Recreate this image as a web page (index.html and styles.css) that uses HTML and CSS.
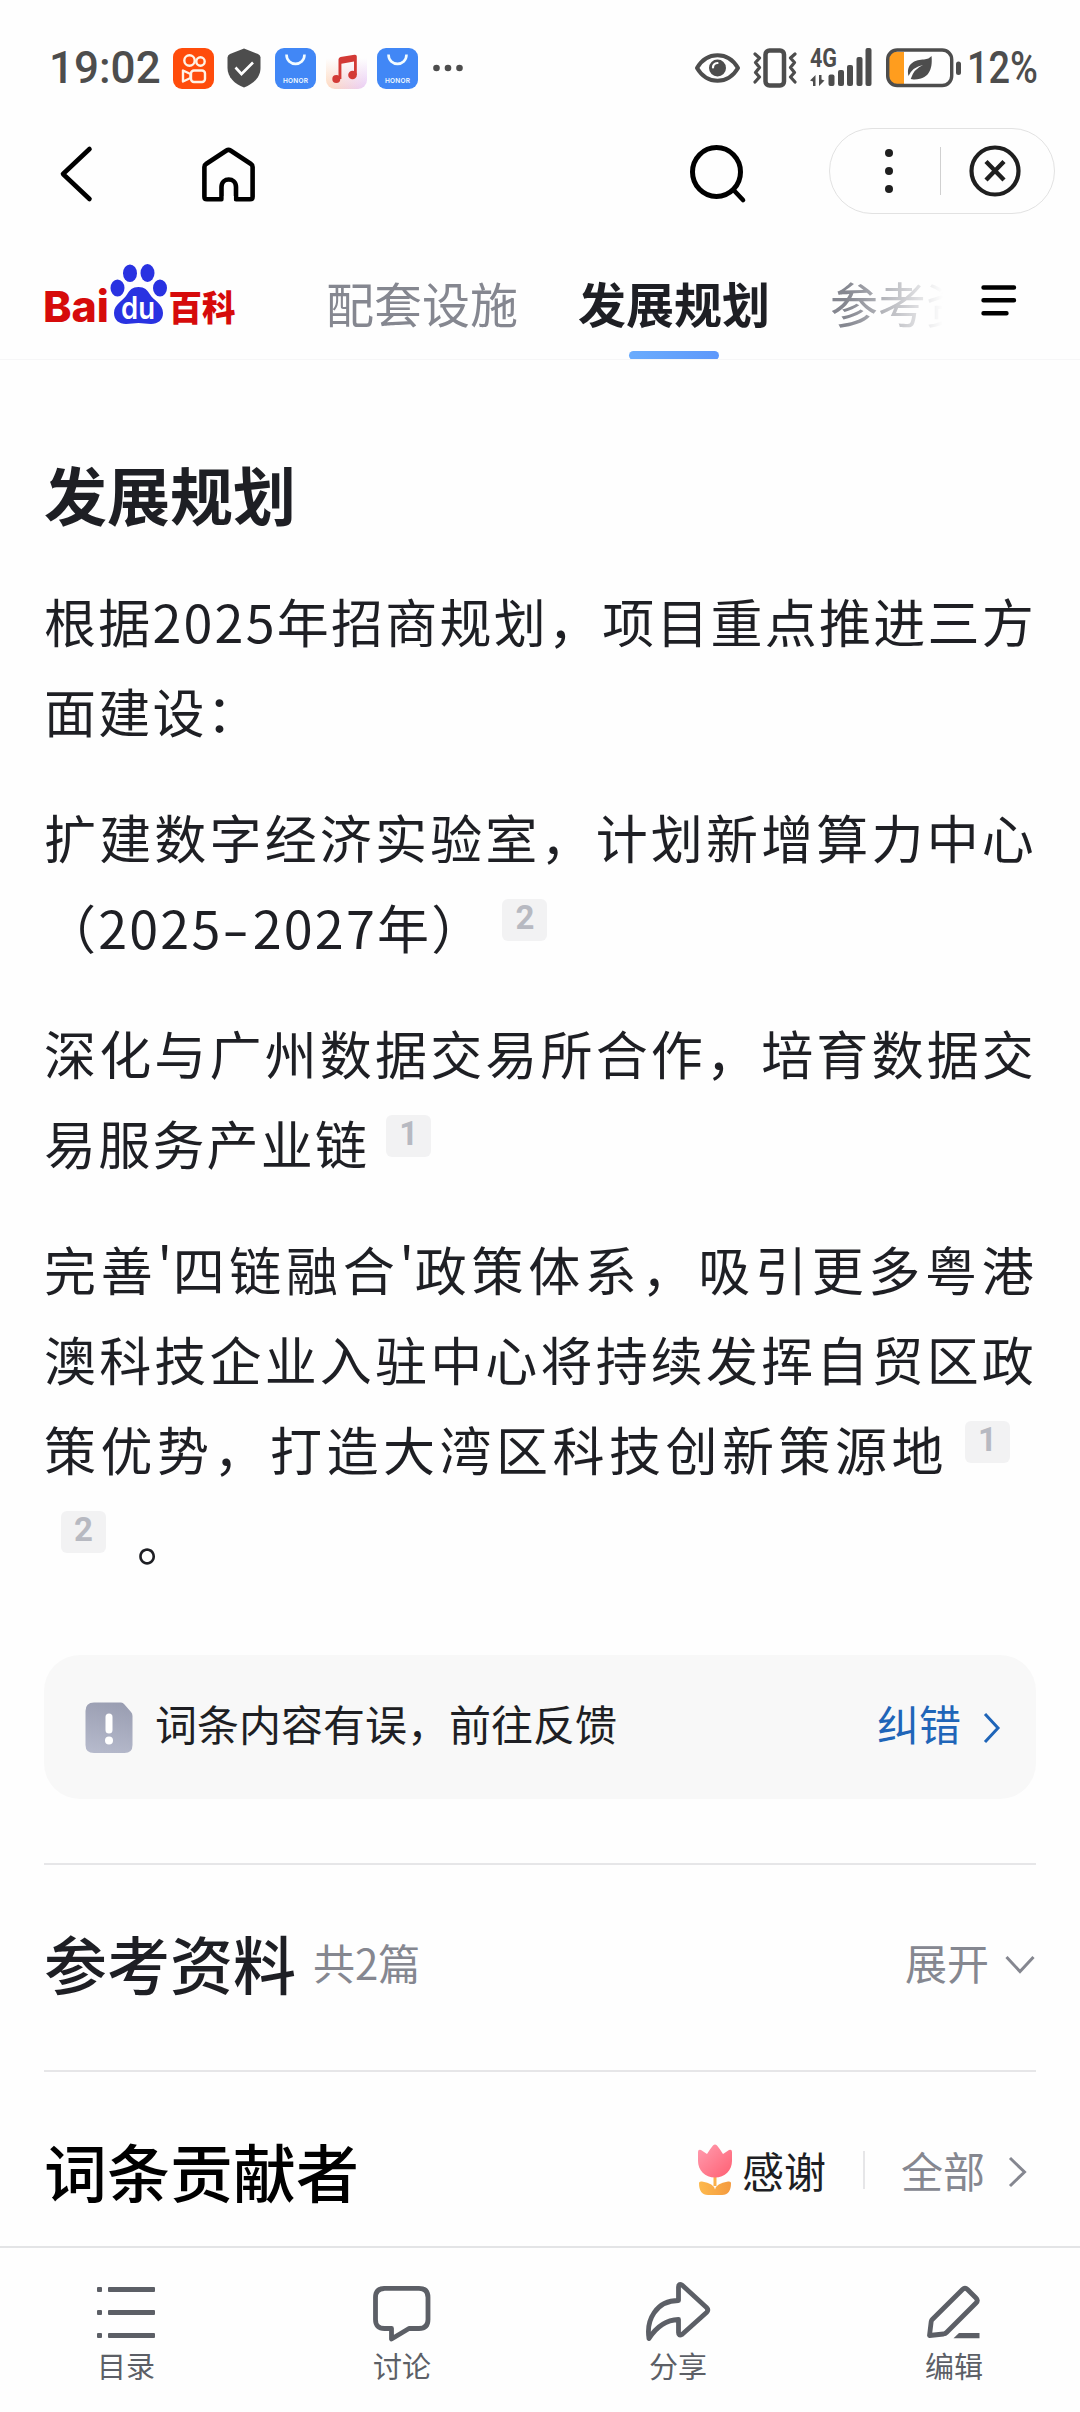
FILE: index.html
```html
<!DOCTYPE html>
<html lang="zh-CN">
<head>
    <meta charset="UTF-8">
    <meta name="viewport" content="width=device-width, initial-scale=1.0">
    <title>发展规划 - 百度百科</title>
    <link rel="stylesheet" href="styles.css">
</head>
<body>
    <div class="status-bar">
        <span class="time">19:02</span>
        <div class="apps">
            <svg width="41" height="41" viewBox="0 0 41 41">
                <rect width="41" height="41" rx="9" fill="#ff4c0b"/>
                <g fill="none" stroke="#fff3e6" stroke-width="2.4">
                    <circle cx="16.5" cy="12.5" r="5.2"/>
                    <circle cx="27.5" cy="13.5" r="4.2"/>
                    <rect x="18" y="22.5" width="14" height="11.5" rx="3"/>
                    <path d="M17.500 26l-7.500-3.500v11l7.500-3.500z" stroke-linejoin="round"/>
                </g>
            </svg>
            <svg class="shield" width="34" height="40" viewBox="0 0 34 40">
                <path d="M17 0.500L31 6q2.500 1 2.500 3.500V20c0 9-7 16-16.500 19.500C7.500 36 .5 29 .5 20V9.500Q.5 7 3 6z" fill="#4d4d4d"/>
                <path d="M8.500 19.500l6 6.500 11.500-11.500" fill="none" stroke="#fff" stroke-width="2.600"/>
            </svg>
            <svg width="41" height="41" viewBox="0 0 41 41">
                <rect width="41" height="41" rx="9" fill="#4187f6"/>
                <path d="M11.500 6.500c0 12.500 18 12.500 18 0" fill="none" stroke="#f2fbff" stroke-width="2.600"/>
                <text class="honor" x="20.500" y="35" text-anchor="middle" textLength="25">HONOR</text>
            </svg>
            <svg width="41" height="41" viewBox="0 0 41 41">
                <defs>
                    <linearGradient id="music" x1="0" y1="0" x2="1" y2="0">
                        <stop offset="0" stop-color="#ffd9bd"/>
                        <stop offset="1" stop-color="#e9cdf7"/>
                    </linearGradient>
                    <linearGradient id="musicTop" x1="0" y1="0" x2="0" y2="1">
                        <stop offset="0.250" stop-color="#fefefe"/>
                        <stop offset="1" stop-color="#fefefe" stop-opacity="0"/>
                    </linearGradient>
                </defs>
                <rect width="41" height="41" rx="9" fill="url(#music)"/>
                <rect width="41" height="41" fill="url(#musicTop)"/>
                <g fill="#d33a36">
                    <circle cx="10.300" cy="31" r="4"/>
                    <circle cx="26.500" cy="27" r="4.300"/>
                    <path d="M12.500 11.500q0-2 2-2.500L28.500 6.800q2.300-.3 2.300 1.700V27h-2.800V13.500l-12.600 2.200V31h-2.900z"/>
                </g>
            </svg>
            <svg width="41" height="41" viewBox="0 0 41 41">
                <rect width="41" height="41" rx="9" fill="#4187f6"/>
                <path d="M11.500 6.500c0 12.500 18 12.500 18 0" fill="none" stroke="#f2fbff" stroke-width="2.600"/>
                <text class="honor" x="20.500" y="35" text-anchor="middle" textLength="25">HONOR</text>
            </svg>
        </div>
        <svg class="more" width="30" height="8" viewBox="0 0 30 8" fill="#4d4d4d">
            <circle cx="3.500" cy="4" r="3.300"/>
            <circle cx="15" cy="4" r="3.300"/>
            <circle cx="26.500" cy="4" r="3.300"/>
        </svg>
        <div class="system">
            <svg class="eye" width="45" height="30" viewBox="0 0 45 30">
                <path d="M2 15C12-2 33-2 43 15C33 32 12 32 2 15z" fill="none" stroke="#4d4d4d" stroke-width="4" stroke-linejoin="round"/>
                <circle cx="22.500" cy="15" r="8.500" fill="#4d4d4d"/>
                <path d="M18 14.500q0-4 4.500-4.500" fill="none" stroke="#fff" stroke-width="2.200" stroke-linecap="round"/>
            </svg>
            <svg class="vibrate" width="46" height="40" viewBox="0 0 46 40" fill="none" stroke="#4d4d4d">
                <rect x="13.500" y="2.500" width="18.500" height="35" rx="4" stroke-width="4.500"/>
                <path d="M3 6l4.500 4-4 4.500 4 5-4 5 4 4.500-4.500 5M43 6l-4.500 4 4 4.500-4 5 4 5-4 4.500 4.500 5" stroke-width="3.200" stroke-linecap="round" stroke-linejoin="round"/>
            </svg>
            <svg class="signal" width="62" height="40" viewBox="0 0 62 40" fill="#4d4d4d">
                <text class="net" x="0" y="18.500" textLength="27" lengthAdjust="spacingAndGlyphs">4G</text>
                <path d="M0 32.500l5.500-5.500V38h-2.500V33.500zM14.500 32.500l-5.500 5.500V27h2.500V31.500z"/>
                <rect x="18.500" y="26.500" width="6" height="11.500" rx="2"/>
                <rect x="28" y="22" width="6" height="16" rx="2"/>
                <rect x="37" y="17" width="6" height="21" rx="2"/>
                <rect x="46.500" y="9" width="6" height="29" rx="2"/>
                <rect x="55.500" y="0" width="6" height="38" rx="2"/>
            </svg>
            <svg class="battery" width="76" height="40" viewBox="0 0 76 40">
                <path d="M3 4h15v32H9q-6 0-6-7z" fill="#ff9d1e"/>
                <rect x="1.700" y="2" width="64" height="35.500" rx="9.500" fill="none" stroke="#4d4d4d" stroke-width="3.400"/>
                <rect x="70" y="13.500" width="5" height="13.500" rx="2.500" fill="#4d4d4d"/>
                <path d="M45.500 8c1 9 0 24-18 23.500l-2.800-.5q3-10 12.300-14-10.500 2-14.500 11C19.500 15 30 11.500 38 11.500q5-.5 7.500-3.500z" fill="#4d4d4d"/>
            </svg>
            <svg class="percent" width="70" height="40" viewBox="0 0 70 40" fill="#4d4d4d">
                <text x="0" y="35" textLength="71" lengthAdjust="spacingAndGlyphs">12%</text>
            </svg>
        </div>
    </div>

    <div class="nav-bar">
        <svg class="back" width="32" height="56" viewBox="0 0 32 56">
            <path d="M29.500 3L3 28l26.500 25" fill="none" stroke="#000" stroke-width="4.600" stroke-linecap="round" stroke-linejoin="round"/>
        </svg>
        <svg class="home" width="54" height="55" viewBox="0 0 54 55">
            <path d="M19.500 52.300H5q-2.600 0-2.600-2.600V20q0-2 1.600-3L24.500 3.500q2-1.300 4 0L49 17q1.600 1 1.600 3v29.700q0 2.600-2.600 2.600H34V40c0-10-14.500-10-14.500 0z" fill="none" stroke="#000" stroke-width="4.600" stroke-linejoin="round"/>
            <path d="M21.800 49h10v6h-10z" fill="#fff"/>
        </svg>
        <svg class="search" width="56" height="58" viewBox="0 0 56 58" fill="none" stroke="#000">
            <ellipse cx="26.500" cy="27" rx="24" ry="24.500" stroke-width="5"/>
            <path d="M44.500 46l8.500 9" stroke-width="4.600" stroke-linecap="round"/>
        </svg>
        <div class="capsule">
            <svg width="8" height="44" viewBox="0 0 8 44" fill="#1f1f1f">
                <circle cx="4" cy="4" r="4"/>
                <circle cx="4" cy="22" r="4"/>
                <circle cx="4" cy="40" r="4"/>
            </svg>
            <span class="capsule-line"></span>
            <svg width="52" height="52" viewBox="0 0 52 52" fill="none" stroke="#1f1f1f">
                <circle cx="26" cy="26" r="23.500" stroke-width="4.200"/>
                <path d="M17 16.500l18 18.500M35 16.500L17 35" stroke-width="4.400"/>
            </svg>
        </div>
    </div>

    <div class="tab-bar">
        <svg class="logo" width="192" height="62" viewBox="0 0 192 62">
            <text class="logo-latin" x="-1" y="58.500" textLength="66" lengthAdjust="spacingAndGlyphs">Bai</text>
            <g fill="#2932e1">
                <ellipse cx="73.500" cy="25" rx="7" ry="8.600"/>
                <ellipse cx="86" cy="10.300" rx="7" ry="8.800"/>
                <ellipse cx="103.500" cy="10" rx="7" ry="9"/>
                <ellipse cx="116" cy="25" rx="7" ry="8.600"/>
                <path d="M94.500 24c6 0 9 3 11.500 7.500 3 5.500 13 9 13 18.500 0 7-5 11-12 11-5 0-8-1-12.500-1s-8 1-12.500 1c-7 0-12-4-12-11 0-9 10-13 13-18.500C85.500 27 88.500 24 94.500 24z"/>
            </g>
            <text class="logo-du" x="77" y="55.500" textLength="34" lengthAdjust="spacingAndGlyphs">du</text>
            <text class="logo-cjk" x="124.500" y="57.500" textLength="67" lengthAdjust="spacingAndGlyphs">百科</text>
        </svg>
        <div class="tabs">
            <span class="tab">配套设施</span>
            <span class="tab active">发展规划</span>
            <span class="tab">参考资料</span>
        </div>
        <svg class="menu" width="36" height="32" viewBox="0 0 36 32" fill="none" stroke="#000" stroke-width="4.400" stroke-linecap="round">
            <path d="M2.500 2.500h30.500M2.500 15.300h30.500M2.500 28.300h23"/>
        </svg>
    </div>

    <div class="content">
        <h2>发展规划</h2>
        <p>根据2025年招商规划，项目重点推进三方面建设：</p>
        <p>扩建数字经济实验室，计划新增算力中心（2025<span class="dash">-</span>2027年）<sup class="wide">2</sup></p>
        <p>深化与广州数据交易所合作，培育数据交易服务产业链<sup>1</sup></p>
        <p>完善<span class="quote">'</span>四链融合<span class="quote">'</span>政策体系，吸引更多粤港澳科技企业入驻中心将持续发挥自贸区政策优势，打造大湾区科技创新策源地<sup>1</sup> <sup>2</sup>。</p>

        <div class="feedback">
            <svg width="48" height="52" viewBox="0 0 48 52">
                <defs>
                    <linearGradient id="doc" x1="0.600" y1="0" x2="0.400" y2="1">
                        <stop offset="0" stop-color="#9a9eb2"/>
                        <stop offset="1" stop-color="#b5b9cb"/>
                    </linearGradient>
                </defs>
                <path d="M9 .5h27q2 0 3.500 2L46 10q1.500 1.500 1.500 4v29q0 8-8 8H9q-8.500 0-8.500-8V9Q.5.500 9 .500z" fill="url(#doc)"/>
                <path d="M24 15v13" stroke="#fff" stroke-width="7" stroke-linecap="round"/>
                <circle cx="24" cy="38.500" r="4" fill="#fff"/>
            </svg>
            <span class="feedback-text">词条内容有误，前往反馈</span>
            <span class="feedback-link">纠错</span>
            <svg width="18" height="32" viewBox="0 0 18 32">
                <path d="M2 2l13 14L2 30" fill="none" stroke="#1f65b8" stroke-width="3"/>
            </svg>
        </div>

        <div class="row">
            <h3>参考资料</h3>
            <span class="count">共2篇</span>
            <span class="action">展开</span>
            <svg class="down" width="30" height="20" viewBox="0 0 30 20">
                <path d="M1.500 2L15 16.500 28.500 2" fill="none" stroke="#858790" stroke-width="3"/>
            </svg>
        </div>
        <div class="row contributors">
            <h3>词条贡献者</h3>
            <div class="thanks">
                <svg width="36" height="52" viewBox="0 0 36 52">
                    <defs>
                        <linearGradient id="petal" x1="0" y1="0" x2="1" y2="1">
                            <stop offset="0" stop-color="#ff9db0"/>
                            <stop offset="1" stop-color="#ff5f72"/>
                        </linearGradient>
                        <linearGradient id="leaf" x1="0" y1="0" x2="1" y2="0">
                            <stop offset="0" stop-color="#fdb94d"/>
                            <stop offset="1" stop-color="#f49a3f"/>
                        </linearGradient>
                    </defs>
                    <path d="M16.500 30h3v12h-3z" fill="#fbb04a"/>
                    <path d="M2 39q0-2 3-1.500 12 2 13 8 1-6 13-8 3-.5 3 1.500 0 12-9 12H11Q2 51 2 39z" fill="url(#leaf)"/>
                    <path d="M1 8q0-3 3-2l6 4q3-5 6-8.500 2-2 4 0Q23 5 26 10l6-4q3-1 3 2v9c0 9-7 16.500-17 16.500S1 26 1 17z" fill="url(#petal)"/>
                </svg>
                <span>感谢</span>
            </div>
            <span class="split"></span>
            <span class="action">全部</span>
            <svg class="right" width="20" height="32" viewBox="0 0 20 32">
                <path d="M2 2l14.500 14L2 30" fill="none" stroke="#858790" stroke-width="3"/>
            </svg>
        </div>
    </div>

    <div class="toolbar">
        <div class="tool">
            <svg width="58" height="60" viewBox="0 0 58 60" fill="#5c5f66">
                <rect x="0" y="5" width="5" height="5" rx="1"/>
                <rect x="11" y="5" width="47" height="5" rx="1"/>
                <rect x="0" y="28" width="5" height="5" rx="1"/>
                <rect x="11" y="28" width="47" height="5" rx="1"/>
                <rect x="0" y="51" width="5" height="5" rx="1"/>
                <rect x="11" y="51" width="47" height="5" rx="1"/>
            </svg>
            <span>目录</span>
        </div>
        <div class="tool">
            <svg width="58" height="60" viewBox="0 0 58 60" fill="none" stroke="#5c5f66" stroke-width="4.800" stroke-linejoin="round">
                <path d="M11 6.400h35q9 0 9 9V37.500q0 9-9 9H36L18.500 57V46.500H11.500q-9 0-9-9v-22q0-9 8.500-9z"/>
            </svg>
            <span>讨论</span>
        </div>
        <div class="tool">
            <svg class="share" width="64" height="60" viewBox="0 0 64 60" fill="none" stroke="#5c5f66" stroke-width="4.800" stroke-linejoin="round">
                <path d="M32.500 18.500V5q0-4 3.500-2L60.500 25.500q2.500 2.500 0 5L36 52.500q-3.500 2-3.500-2V37.500C20 38 10 45.500 3 56.500 0 38 10 18.500 32.500 18.500z"/>
            </svg>
            <span>分享</span>
        </div>
        <div class="tool">
            <svg width="58" height="60" viewBox="0 0 58 60">
                <path d="M4.500 53.500l1.700-14q.3-1.200 1.300-2.200L37.500 7.500q2.500-2.500 5 0l8.500 8.500q2.500 2.500 0 5L21.500 50.500q-1.200 1.200-3 1.500z" fill="none" stroke="#5c5f66" stroke-width="4.800" stroke-linejoin="round"/>
                <path d="M28.500 56.300l5.500-5.300h20.500v5.300z" fill="#5c5f66"/>
            </svg>
            <span>编辑</span>
        </div>
    </div>
</body>
</html>
```
FILE: styles.css
```css
* {
    box-sizing: border-box;
}
body {
    margin: 0;
    width: 1080px;
    height: 2412px;
    display: flex;
    flex-direction: column;
    overflow: hidden;
    background-color: #fefefe;
    color: #1e1f24;
    font-family: "Noto Sans CJK SC", sans-serif;
}
svg {
    display: block;
    flex-shrink: 0;
    overflow: visible;
}
h2, h3, p {
    margin: 0;
}

/* status bar */
.status-bar {
    height: 128px;
    padding: 8px 43px 0 49px;
    flex-shrink: 0;
    display: flex;
    align-items: center;
    color: #4d4d4d;
    font-family: Roboto, sans-serif;
    font-weight: 500;
}
.time {
    width: 124px;
    font-size: 44px;
}
.apps {
    display: flex;
    align-items: center;
    gap: 10px;
}
.shield {
    margin: 0 4px 0 3px;
}
.honor {
    fill: #f2fbff;
    font: 600 6.5px Inter, sans-serif;
}
.more {
    margin-left: 15px;
}
.system {
    margin-left: auto;
    display: flex;
    align-items: center;
}
.vibrate {
    margin-left: 12px;
}
.signal {
    margin-left: 12px;
}
.net {
    font: 700 25px Roboto, sans-serif;
}
.battery {
    margin-left: 14px;
}
.percent {
    margin-left: 5px;
    font-size: 44px;
}

/* nav */
.nav-bar {
    height: 85px;
    padding: 0 25px 0 60px;
    flex-shrink: 0;
    display: flex;
    align-items: center;
}
.back, .home {
    margin-top: 7px;
}
.home {
    margin-left: 110px;
}
.search {
    margin-left: auto;
    margin-top: 6px;
}
.capsule {
    width: 226px;
    height: 86px;
    margin-left: 83px;
    padding: 0 33px 0 55px;
    display: flex;
    align-items: center;
    justify-content: space-between;
    border: 1px solid #e2e2e2;
    border-radius: 43px;
}
.capsule-line {
    width: 1px;
    height: 48px;
    margin-left: 18px;
    background-color: #d0d0d0;
}

/* tabs */
.tab-bar {
    height: 147px;
    padding-left: 44px;
    flex-shrink: 0;
    display: flex;
    border-bottom: 1px solid #f6f6f7;
}
.logo {
    margin-top: 50px;
}
.logo-latin {
    fill: #d60b0b;
    font: 800 43px Inter, sans-serif;
}
.logo-du {
    fill: #fff;
    font: 600 31px Inter, sans-serif;
}
.logo-cjk {
    fill: #d60b0b;
    font: 900 35px "Noto Sans CJK SC", sans-serif;
}
.tabs {
    width: 617px;
    margin-left: 90px;
    display: flex;
    gap: 60px;
    overflow: hidden;
    -webkit-mask-image: linear-gradient(to right, #000 520px, transparent 617px);
    mask-image: linear-gradient(to right, #000 520px, transparent 617px);
}
.tab {
    height: 147px;
    padding-top: 54px;
    flex-shrink: 0;
    display: flex;
    flex-direction: column;
    align-items: center;
    color: #858790;
    font-size: 48px;
    line-height: 70px;
}
.tab.active {
    color: #1e1f24;
    font-weight: 700;
}
.tab.active::after {
    content: "";
    width: 90px;
    height: 9px;
    margin-top: 14px;
    border-radius: 5px;
    background: linear-gradient(to right, #6aacfd, #5e98fb);
}
.menu {
    margin: 72px 0 0 38px;
}

/* article */
.content {
    flex: 1;
    padding: 88px 44px 0;
}
.content h2 {
    margin-bottom: 38px;
    font-size: 63px;
    line-height: 90px;
}
.content p {
    margin: 0 0 36px;
    font-size: 52px;
    line-height: 90px;
    letter-spacing: 2.2px;
    text-align: justify;
}
.dash {
    display: inline-block;
    margin: 0 5px;
    transform: scaleX(1.5);
}
.quote {
    margin-right: -4px;
}
sup {
    display: inline-block;
    width: 45px;
    height: 42px;
    margin: 0 26px 0 17px;
    vertical-align: 20px;
    border-radius: 6px;
    background-color: #f2f2f3;
    color: #b7b9c1;
    font: 700 33px/37px Roboto, sans-serif;
    letter-spacing: 0;
    text-align: center;
}
sup:last-child {
    margin-right: 31px;
}
sup.wide {
    margin-left: 17px;
}
.feedback {
    height: 144px;
    margin-top: 71px;
    padding: 0 35px 0 41px;
    display: flex;
    align-items: center;
    border-radius: 36px;
    background-color: #f8f8f8;
    font-size: 42px;
    line-height: 60px;
}
.feedback svg {
    margin-top: 2px;
}
.feedback-text {
    margin: -9px 0 0 22px;
}
.feedback-link {
    margin: -9px 22px 0 auto;
    color: #1f65b8;
}
.row {
    height: 207px;
    padding-bottom: 12px;
    display: flex;
    align-items: center;
    border-top: 2px solid #e6e6e8;
}
.feedback + .row {
    margin-top: 64px;
}
.row h3 {
    font-size: 63px;
    font-weight: 500;
    line-height: 90px;
}
.count, .action {
    color: #858790;
    font-size: 42px;
}
.count {
    margin-left: 17px;
}
.action {
    margin-left: auto;
}
.down {
    margin: 6px 1px 0 16px;
}
.contributors {
    height: 173px;
    padding: 24px 0 0;
}
.contributors h3 {
    color: #000;
}
.thanks {
    margin-left: auto;
    display: flex;
    align-items: center;
    gap: 9px;
    font-size: 42px;
}
.split {
    width: 2px;
    height: 38px;
    margin: 0 36px 0 37px;
    background-color: #e6e6e8;
}
.contributors .action {
    margin-left: 0;
}
.right {
    margin: 4px 8px 0 23px;
}

/* bottom toolbar */
.toolbar {
    height: 166px;
    padding: 34px 97px 0;
    flex-shrink: 0;
    display: flex;
    justify-content: space-between;
    border-top: 2px solid #e3e4e6;
    background-color: #fefefe;
}
.tool {
    width: 58px;
    display: flex;
    flex-direction: column;
    align-items: center;
    color: #5c5f66;
    font-size: 29px;
    line-height: 42px;
    white-space: nowrap;
}
.tool span {
    margin-top: 2px;
}
```
